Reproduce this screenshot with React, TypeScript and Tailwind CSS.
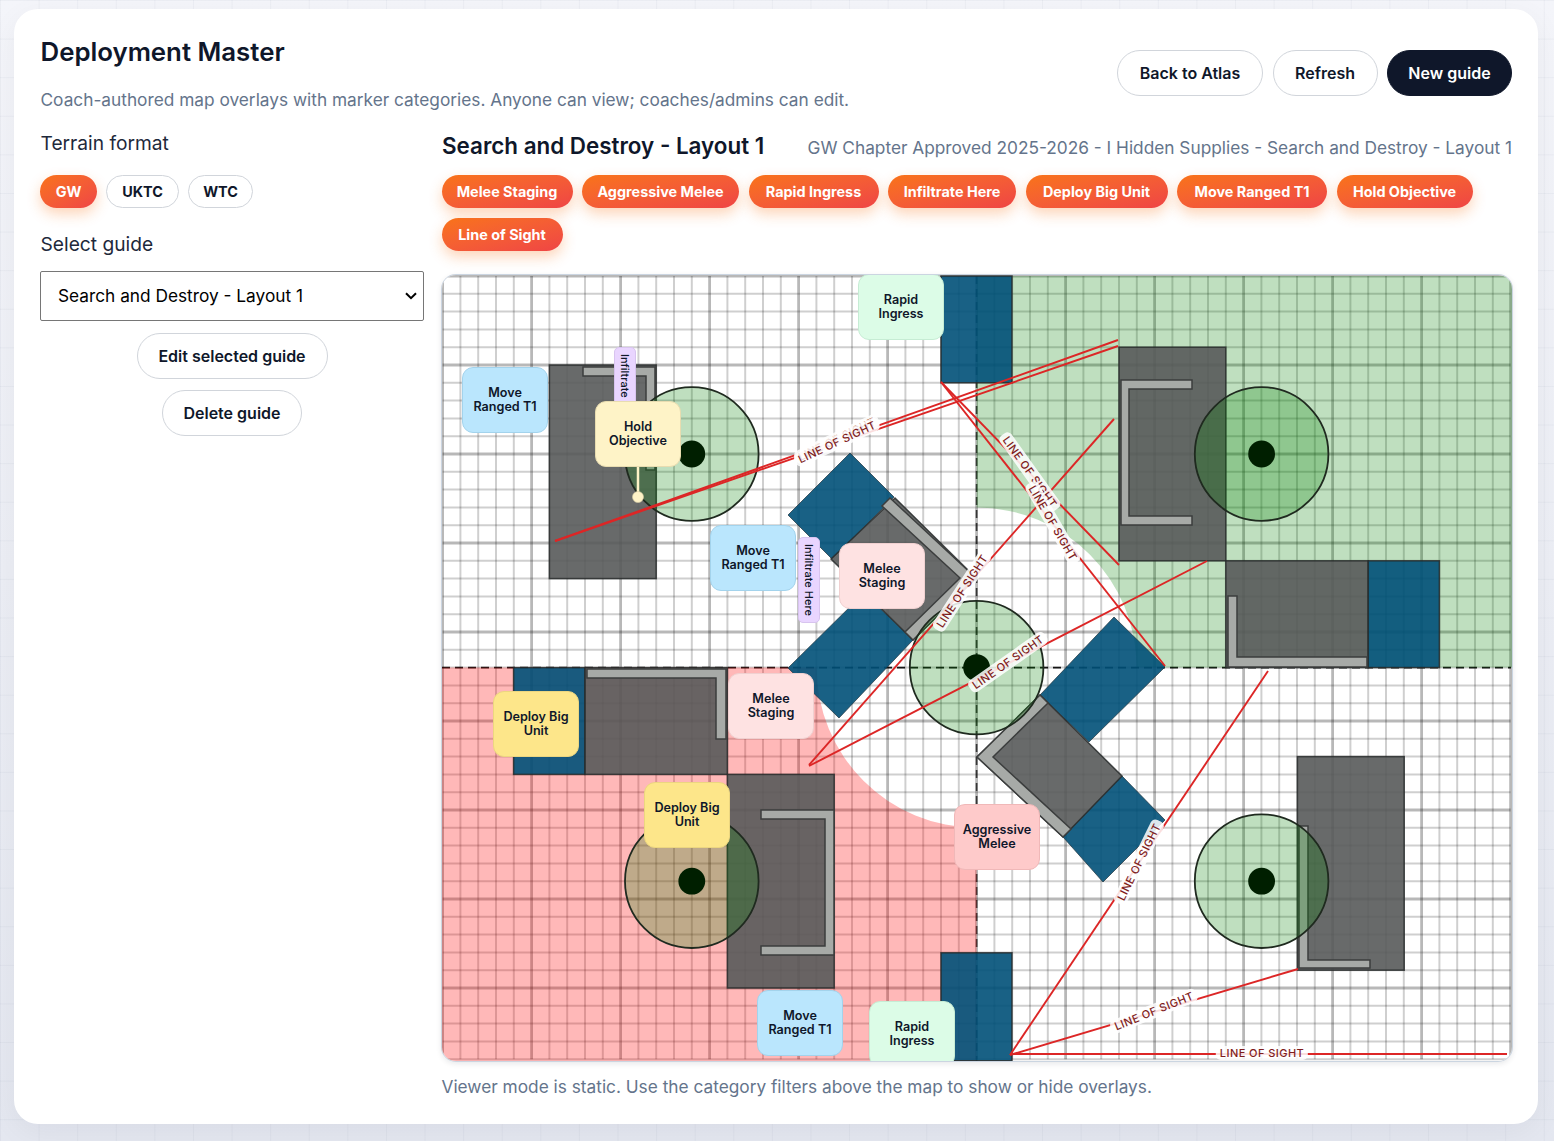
import React from "react";

const FONT = "font-['Inter','Noto_Sans',sans-serif]";

const categories = [
  { t: "Melee Staging", w: "w-[131px]" },
  { t: "Aggressive Melee", w: "w-[157px]" },
  { t: "Rapid Ingress", w: "w-[130px]" },
  { t: "Infiltrate Here", w: "w-[128px]" },
  { t: "Deploy Big Unit", w: "w-[142px]" },
  { t: "Move Ranged T1", w: "w-[150px]" },
  { t: "Hold Objective", w: "w-[136px]" },
  { t: "Line of Sight", w: "w-[121px]" },
];

// all board coordinates are screen px, the svg viewBox starts at the map corner
const MAP_X = 442;
const MAP_Y = 275;
const GX = 442.6;
const GY = 276;
const CELL = 17.8;
// labels are tilted in board percent space, not in px
const ASPECT = 1.36;

const TERRAIN = "rgba(88,90,90,0.9)";
const RUIN = "rgba(0,80,120,0.9)";

const rects = [
  { x: 549.4, y: 365, w: 106.8, h: 213.6, fill: TERRAIN },
  { x: 1119, y: 347.2, w: 106.8, h: 213.6, fill: TERRAIN },
  { x: 1225.8, y: 560.8, w: 142.4, h: 106.8, fill: TERRAIN },
  { x: 584.8, y: 667.6, w: 142.6, h: 106.8, fill: TERRAIN },
  { x: 727.4, y: 774.4, w: 106.8, h: 213.6, fill: TERRAIN },
  { x: 1297.4, y: 756.6, w: 106.8, h: 213.6, fill: TERRAIN },
  { x: 941, y: 276, w: 71, h: 106.8, fill: RUIN },
  { x: 941, y: 952.8, w: 71, h: 108, fill: RUIN },
  { x: 1368.2, y: 560.8, w: 71.2, h: 106.8, fill: RUIN },
  { x: 513.6, y: 667.6, w: 71.2, h: 106.8, fill: RUIN },
];

const tiltedRuins = [
  "850,453 894,497 832,559 788,515",
  "913,640 839,718 788,668 864,593",
  "1040,695 1114,617 1165,667 1089,742",
  "1122,776 1165,820 1103,882 1063,837",
];

const tiltedTerrain = [
  "895,498 976,578 913,640 831,559",
  "1040,695 1122,776 1063,837 977,757",
];

const walls = [
  "583,367 655,367 655,470 646,470 646,376 583,376",
  "1192,380 1121,380 1121,525 1192,525 1192,516 1129,516 1129,389 1192,389",
  "1228,596 1237,596 1237,657 1367,657 1367,667 1228,667",
  "587,669 726,669 726,739 716,739 716,678 587,678",
  "761,810 834,810 834,955 761,955 761,946 825,946 825,819 761,819",
  "1299,826 1308,826 1308,960 1370,960 1370,968 1299,968",
  "913,640 976,578 890,498 882,506 960,578 905,632",
  "1040,695 977,757 1063,837 1071,829 993,757 1048,703",
];

const objectives = [
  [691.8, 454],
  [1261.6, 454],
  [976.6, 667.6],
  [691.8, 881.2],
  [1261.6, 881.2],
];

const sightLines = [
  [555, 541, 1118, 340],
  [555, 541, 1118, 346],
  [941, 382, 1119, 565],
  [941, 382, 1165, 666],
  [1114, 419, 809, 765],
  [1207, 561, 809, 766],
  [1268, 671, 1010, 1055],
  [1298, 969, 1010, 1055],
  [1514, 1054, 1010, 1054],
];

const tones: Record<string, string> = {
  rapid: "bg-[#dcfce7] border-[#c6ecd4]",
  move: "bg-[#bae6fd] border-[#a3d3ec]",
  hold: "bg-[#fef3c7] border-[#e8dcb0]",
  melee: "bg-[#fee2e2] border-[#f0d0d0]",
  deploy: "bg-[#fde68a] border-[#ecd680]",
  aggressive: "bg-[#fecaca] border-[#f0b8b8]",
};

const markers = [
  { t: "Rapid Ingress", x: 858, y: 274, tone: "rapid" },
  { t: "Move Ranged T1", x: 462, y: 367, tone: "move" },
  { t: "Move Ranged T1", x: 710, y: 525, tone: "move" },
  { t: "Melee Staging", x: 839, y: 543, tone: "melee" },
  { t: "Melee Staging", x: 728, y: 673, tone: "melee" },
  { t: "Deploy Big Unit", x: 493, y: 691, tone: "deploy" },
  { t: "Deploy Big Unit", x: 644, y: 782, tone: "deploy" },
  { t: "Aggressive Melee", x: 954, y: 804, tone: "aggressive" },
  { t: "Move Ranged T1", x: 757, y: 990, tone: "move" },
  { t: "Rapid Ingress", x: 869, y: 1001, tone: "rapid" },
];

function Pill({ children, w, dark }: { children: React.ReactNode; w: string; dark?: boolean }) {
  return (
    <button
      className={
        (dark
          ? "h-[46px] rounded-full border border-[#0f172a] bg-[#0f172a] text-white text-[16px] font-semibold "
          : "h-[46px] rounded-full border border-[#d1d5db] bg-white text-[#0f172a] text-[16px] font-semibold ") + w
      }
    >
      {children}
    </button>
  );
}

function Chip({ children, w, on }: { children: React.ReactNode; w: string; on?: boolean }) {
  return (
    <button
      className={
        (on
          ? "h-[33px] rounded-full bg-linear-to-br from-[#f97316] to-[#ef4444] text-white text-[14.4px] font-bold shadow-[0_6px_14px_rgba(249,115,22,0.3)] "
          : "h-[33px] rounded-full border border-[#d1d5db] bg-white text-[#0f172a] text-[14.4px] font-bold ") + w
      }
    >
      {children}
    </button>
  );
}

function Board() {
  const grid = [];
  for (let i = 0; i <= 60; i++) {
    const x = GX + i * CELL;
    grid.push(
      <line
        key={"v" + i}
        x1={x}
        y1={GY}
        x2={x}
        y2={GY + 44 * CELL}
        stroke={i % 5 === 0 ? "rgba(0,0,0,0.28)" : "rgba(0,0,0,0.19)"}
        strokeWidth={i % 5 === 0 ? 2.8 : 2}
      />
    );
  }
  for (let i = 0; i <= 44; i++) {
    const y = GY + i * CELL;
    grid.push(
      <line
        key={"h" + i}
        x1={GX}
        y1={y}
        x2={GX + 60 * CELL}
        y2={y}
        stroke={i % 5 === 0 ? "rgba(0,0,0,0.28)" : "rgba(0,0,0,0.19)"}
        strokeWidth={i % 5 === 0 ? 2.8 : 2}
      />
    );
  }

  return (
    <svg viewBox={`${MAP_X} ${MAP_Y} 1070 786`} className="absolute inset-0 w-[1070px] h-[786px]">
      <rect x={MAP_X} y={MAP_Y} width={1070} height={786} fill="#fff" />
      <g className="blur-[0.6px]">
        {grid}
        <line x1={442} y1={667.6} x2={1511} y2={667.6} stroke="rgba(0,0,0,0.9)" strokeWidth={1.7} strokeDasharray="8 5" />
        <line x1={976.6} y1={276} x2={976.6} y2={1061} stroke="rgba(0,0,0,0.7)" strokeWidth={1.7} strokeDasharray="8 5" />

        {/* deployment zones */}
        <path d="M976.6 276H1512V667.6H1136.6A160 160 0 0 0 976.6 507.6Z" fill="rgba(0,128,0,0.25)" />
        <path d="M442 667.6H816.6A160 160 0 0 0 976.6 827.6V1061H442Z" fill="rgba(255,0,0,0.28)" />

        {/* terrain */}
        {rects.map((r, i) => (
          <rect key={i} x={r.x} y={r.y} width={r.w} height={r.h} fill={r.fill} stroke="rgba(40,44,44,0.85)" strokeWidth={1.5} />
        ))}
        {tiltedRuins.map((p) => (
          <polygon key={p} points={p} fill={RUIN} stroke="rgba(30,50,60,0.7)" strokeWidth={1} />
        ))}
        {tiltedTerrain.map((p) => (
          <polygon key={p} points={p} fill={TERRAIN} stroke="rgba(40,44,44,0.85)" strokeWidth={1.5} />
        ))}
        {walls.map((p) => (
          <polygon key={p} points={p} fill="#a7aaa7" stroke="#3c3e3e" strokeWidth={1.5} />
        ))}

        {/* objectives */}
        {objectives.map(([x, y]) => (
          <g key={x + "-" + y}>
            <circle cx={x} cy={y} r={66.8} fill="rgba(0,128,0,0.25)" stroke="#1f2a1f" strokeWidth={1.8} />
            <circle cx={x} cy={y} r={13.4} fill="#001f00" />
          </g>
        ))}
      </g>

      {/* sight lines */}
      {sightLines.map(([a, b, c, d], i) => (
        <line key={i} x1={Math.min(a, 1507)} y1={b} x2={c} y2={d} stroke="#dc2626" strokeWidth={1.9} />
      ))}

      {/* marker pin */}
      <line x1={638} y1={467} x2={638} y2={492} stroke="#fef3c7" strokeWidth={2.5} />
      <circle cx={638} cy={497} r={5.5} fill="#fef3c7" stroke="#d8cda4" strokeWidth={0.6} />
    </svg>
  );
}

function SightLabel({ line }: { line: number[] }) {
  const [a, b, c, d] = line;
  let angle = (Math.atan2((d - b) * ASPECT, c - a) * 180) / Math.PI;
  if (angle > 90) angle -= 180;
  if (angle < -90) angle += 180;
  return (
    <span
      className="absolute px-1 rounded-[5px] bg-white/85 text-[#7f1d1d] text-[11px] leading-[14px] font-medium tracking-[0.04em] whitespace-nowrap"
      style={{
        left: (a + c) / 2 - MAP_X,
        top: (b + d) / 2 - MAP_Y - 1.5,
        transform: `translate(-50%, -50%) rotate(${angle}deg)`,
      }}
    >
      LINE OF SIGHT
    </span>
  );
}

function Marker({ t, x, y, tone }: { t: string; x: number; y: number; tone: string }) {
  return (
    <div
      className={
        "absolute w-[86px] h-[66px] rounded-[11px] border flex items-center justify-center text-center px-1 text-[#0f172a] text-[12.6px] leading-[13.6px] font-semibold " +
        tones[tone]
      }
      style={{ left: x - MAP_X, top: y - MAP_Y }}
    >
      {t}
    </div>
  );
}

function Strip({ x, y }: { x: number; y: number }) {
  return (
    <div
      className="absolute w-[22px] h-[86px] rounded-[5px] border border-[#d8c4ef] bg-[#e9d5ff] flex items-center justify-center text-[#0f172a] text-[11px] font-medium whitespace-nowrap [writing-mode:vertical-rl]"
      style={{ left: x - MAP_X, top: y - MAP_Y }}
    >
      Infiltrate Here
    </div>
  );
}

export default function App() {
  return (
    <div
      className={
        "min-h-screen pl-[14px] pr-[16px] pt-[9px] pb-[17px] bg-[#eceef5] bg-[linear-gradient(rgba(100,116,139,0.06)_1px,transparent_1px),linear-gradient(90deg,rgba(100,116,139,0.06)_1px,transparent_1px),linear-gradient(180deg,#f4f5fa,#e4e7f0)] bg-[size:38.6px_38.6px,38.6px_38.6px,100%_100%] " +
        FONT
      }
    >
      <div className="h-[1115px] rounded-[24px] bg-white px-[26px] shadow-[0_8px_30px_rgba(15,23,42,0.05)]">
        {/* Header */}
        <div className="flex justify-between pt-[24px] h-[124px]">
          <div>
            <h1 className="pl-[0.5px] text-[25.8px] leading-[38px] font-semibold text-[#0f172a]">Deployment Master</h1>
            <p className="mt-[17px] pl-[0.5px] text-[17.28px] leading-[24px] text-[#64748b]">
              Coach-authored map overlays with marker categories. Anyone can view; coaches/admins can edit.
            </p>
          </div>
          <div className="flex gap-[9.5px] pt-[17px] items-start">
            <Pill w="w-[146px]">Back to Atlas</Pill>
            <Pill w="w-[105px]">Refresh</Pill>
            <Pill w="w-[125px]" dark>
              New guide
            </Pill>
          </div>
        </div>

        <div className="grid grid-cols-[384px_1070.5px] gap-x-[17.5px]">
          {/* Sidebar */}
          <aside>
            <div className="pl-[0.5px] text-[19.2px] leading-[20px] text-[#1e293b]">Terrain format</div>
            <div className="flex gap-[9px] mt-[22px]">
              <Chip w="w-[57px]" on>
                GW
              </Chip>
              <Chip w="w-[73px]">UKTC</Chip>
              <Chip w="w-[65px]">WTC</Chip>
            </div>
            <div className="mt-[26px] pl-[0.5px] text-[19.2px] leading-[20px] text-[#1e293b]">Select guide</div>
            <div className="relative mt-[17px]">
              <select
                defaultValue="a"
                className="w-full h-[50px] pl-[17px] bg-white border border-[#767676] rounded-[2px] text-[17.28px] text-black appearance-none"
              >
                <option value="a">Search and Destroy - Layout 1</option>
              </select>
              <svg viewBox="0 0 12 8" className="absolute right-[7px] top-[21px] w-[12px] h-[8px] pointer-events-none">
                <path d="M1 1.2 6 6.2 11 1.2" fill="none" stroke="#000" strokeWidth="2" />
              </svg>
            </div>
            <div className="flex flex-col items-center gap-[11px] mt-[12px]">
              <Pill w="w-[191px]">Edit selected guide</Pill>
              <Pill w="w-[140px]">Delete guide</Pill>
            </div>
          </aside>

          {/* Main */}
          <main>
            <div className="flex items-center justify-between h-[28px]">
              <h2 className="pl-[0.5px] pb-[2px] text-[22.4px] font-semibold text-[#0f172a]">Search and Destroy - Layout 1</h2>
              <span className="pt-[1px] text-[17.28px] text-[#64748b]">
                GW Chapter Approved 2025-2026 - I Hidden Supplies - Search and Destroy - Layout 1
              </span>
            </div>
            <div className="flex flex-wrap gap-[10px_9.5px] mt-[14px]">
              {categories.map((c) => (
                <Chip key={c.t} w={c.w} on>
                  {c.t}
                </Chip>
              ))}
            </div>
            <div className="relative mt-[24px] ml-[0.5px] w-[1070px] h-[786px] rounded-[14px] overflow-hidden ring-1 ring-[#cbd5e1] shadow-[0_2px_6px_rgba(15,23,42,0.12)]">
              <Board />
              {sightLines.map((l, i) => (
                <SightLabel key={i} line={l} />
              ))}
              <Strip x={614} y={347} />
              <Strip x={798} y={537} />
              <div className="absolute w-[86px] h-[66px] left-[153px] top-[126px] rounded-[11px] border border-[#e8dcb0] bg-[#fef3c7] flex items-center justify-center text-center text-[#0f172a] text-[12.6px] leading-[13.6px] font-semibold">
                Hold Objective
              </div>
              {markers.map((m, i) => (
                <Marker key={i} {...m} />
              ))}
            </div>
            <p className="mt-[14px] text-[17.28px] leading-[24px] text-[#64748b]">
              Viewer mode is static. Use the category filters above the map to show or hide overlays.
            </p>
          </main>
        </div>
      </div>
    </div>
  );
}
